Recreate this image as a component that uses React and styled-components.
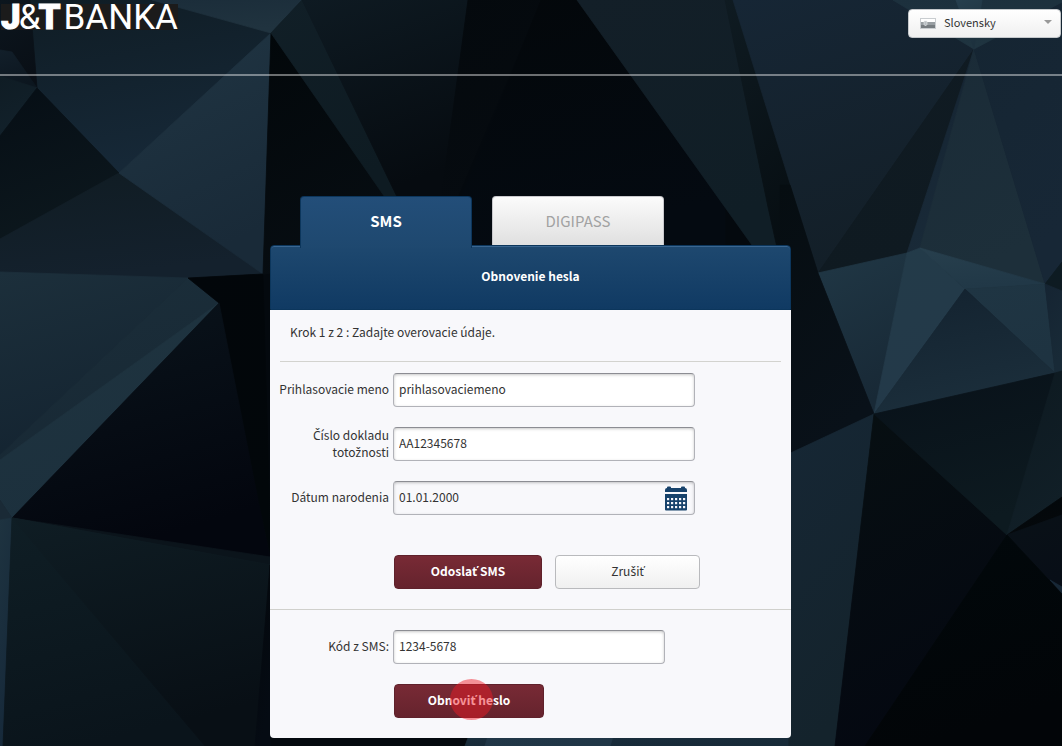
import { useState } from "react";
import styled, { createGlobalStyle } from "styled-components";

const GlobalStyle = createGlobalStyle`
  *, *::before, *::after {
    box-sizing: border-box;
  }

  body {
    margin: 0;
    background: #04090e;
    color: #333333;
    font-family: "Noto Sans CJK SC", "Noto Sans", sans-serif;
    font-size: 12px;
    line-height: 17px;
  }

  button, input, select {
    font: inherit;
    color: inherit;
  }
`

// points, colour at the top, colour at the bottom
const facets = [
  ["0,0 152,0 271,33 119,173 37,88 30,30", "#0f1c24", "#162837"],
  ["0,0 30,0 37,88 12,52 0,50", "#0c161e", "#090f16"],
  ["0,50 12,52 37,88 0,76", "#121f2a", "#0c161f"],
  ["0,76 37,88 0,136", "#0f1c24", "#12212b"],
  ["37,88 119,173 0,239 0,136", "#060e15", "#0c171d"],
  ["119,173 0,239 0,272 188,278 263,274", "#101c23", "#14212d"],
  ["271,33 119,173 263,274", "#203543", "#192a38"],
  ["152,0 302,0 271,33", "#1b2d3a", "#20333f"],
  ["0,272 188,278 0,455", "#1c2f3b", "#142431"],
  ["188,278 219,303 0,460 0,455", "#1b2e3a", "#182935"],
  ["219,303 0,460 0,500 12,518", "#1f3440", "#1c303d"],
  ["0,500 12,518 0,520", "#1a2a36", "#1a2a36"],
  ["0,520 12,518 3,746 0,746", "#1e3340", "#16293a"],
  ["188,278 263,274 271,557 258,500 219,303", "#02060a", "#02070a"],
  ["219,303 258,500 270,557 12,518", "#0a141c", "#03060e"],
  ["12,518 270,557 270,565", "#0b141b", "#0b141b"],
  ["12,518 270,565 255,746 3,746", "#0f1e25", "#0a141b"],
  ["12,518 270,565 255,746 205,746", "#0f1d24", "#080f15"],
  ["270,565 270,746 255,746", "#04080c", "#050b13"],
  ["271,33 389,203 389,260 263,274", "#02070a", "#070d12"],
  ["302,0 271,33 389,203 400,203", "#111f27", "#0e1b22"],
  ["302,0 468,0 446,162 440,203 400,203", "#0e1a22", "#060b10"],
  ["468,0 541,0 456,200 440,203 446,162", "#04090d", "#060b10"],
  ["541,0 577,0 725,207 725,250 440,250", "#03070a", "#040a11"],
  ["577,0 725,0 768,207 778,252 757,252", "#131f28", "#101e26"],
  ["725,0 733,0 818,273 790,280 778,252 768,207", "#0f1b22", "#060d11"],
  ["733,0 974,0 974,49 818,273", "#162635", "#131f28"],
  ["974,49 818,273 907,253", "#101b23", "#0f1a21"],
  ["974,49 907,253 920,248", "#142331", "#192a38"],
  ["974,49 920,248 1045,284", "#1a2b37", "#1d2f3a"],
  ["974,0 1062,0 1062,262 1045,284 974,49", "#152532", "#172736"],
  ["893,0 1062,0 1062,2 974,49", "#1c303d", "#1f3440"],
  ["956,0 982,0 974,49", "#263f4e", "#1d313e"],
  ["818,273 907,253 874,414", "#203745", "#182936"],
  ["907,253 920,248 965,289 874,414", "#233b49", "#233949"],
  ["920,248 1045,284 965,289", "#273f4d", "#213847"],
  ["965,289 1045,284 1055,373", "#1f3543", "#1e3341"],
  ["965,289 1055,373 874,414", "#13222f", "#1b2e3b"],
  ["1045,284 1062,262 1062,291", "#0d1b22", "#0e1b22"],
  ["1045,284 1062,291 1062,372 1055,373", "#152432", "#182a37"],
  ["790,185 818,273 874,414 780,458 780,185", "#060d11", "#091119"],
  ["874,414 780,458 780,746 835,746", "#162735", "#14232c"],
  ["874,414 1007,535 865,746 835,746", "#070f12", "#040811"],
  ["874,414 1055,373 1007,535", "#081119", "#0d1a20"],
  ["1055,373 1062,371 1062,497 1007,535", "#0d1920", "#111f27"],
  ["1007,535 1062,497 1062,515", "#02070a", "#05090c"],
  ["1007,535 1062,515 1062,594", "#091117", "#080e17"],
  ["1050,580 1062,587 1062,594", "#182938", "#162634"],
  ["1007,535 1062,594 1062,746 865,746", "#01080b", "#020508"],
  ["471,730 788,730 788,746 465,746", "#1b303e", "#172a38"],
  ["490,730 615,730 610,746 485,746", "#213748", "#203646"],
]

const Facets = () => (
  <Backdrop viewBox="0 0 1062 746" preserveAspectRatio="xMidYMin slice" aria-hidden="true">
    <defs>
      {facets.map(([points, from, to], i) => (
        <linearGradient key={points} id={`facet${i}`} x1="0" y1="0" x2="0.3" y2="1">
          <stop offset="0" stopColor={from} />
          <stop offset="1" stopColor={to} />
        </linearGradient>
      ))}
    </defs>
    {facets.map(([points], i) => (
      <polygon key={points} points={points} fill={`url(#facet${i})`} stroke={`url(#facet${i})`} strokeWidth="0.8" />
    ))}
  </Backdrop>
)

// letters with a caron are missing from the main font
const Caron = ({ children }) =>
  children.split(/([čšžť])/i).map((part, i) => (i % 2 ? <Letter key={i}>{part}</Letter> : part))

const dotColumns = [3, 7, 11, 15, 19]
const dotRows = [12, 16, 20]

const CalendarIcon = () => (
  <svg width="22" height="25" viewBox="0 0 22 25" fill="#17426b" aria-hidden="true">
    <path d="M2 1.500a1 1 0 0 1 1-1h2a1 1 0 0 1 1 1V2h10v-.5a1 1 0 0 1 1-1h2a1 1 0 0 1 1 1V2a2 2 0 0 1 2 2v2H0V4a2 2 0 0 1 2-2z" />
    <path d="M0 8h22v15.500a1 1 0 0 1-1 1H1a1 1 0 0 1-1-1z" />
    <g fill="#f7f7fb">
      {dotRows.map((y) =>
        dotColumns.map((x) => <rect key={`${x}-${y}`} x={x - 1} y={y} width="2.2" height="2.2" />)
      )}
    </g>
  </svg>
)

const FlagIcon = () => (
  <svg width="16" height="11" viewBox="0 0 16 11" aria-hidden="true">
    <rect width="16" height="11" fill="#c9cdd0" />
    <rect x="1" y="1" width="14" height="3" fill="#ffffff" />
    <rect x="1" y="4" width="14" height="3" fill="#989ea2" />
    <rect x="1" y="7" width="14" height="3" fill="#767c80" />
    <path d="M4 3h3v3.500L5.500 8 4 6.500z" fill="#b9bfc3" stroke="#eceeef" strokeWidth="0.6" />
  </svg>
)

const App = () => {
  const [active, setActive] = useState("sms")
  const [login, setLogin] = useState("prihlasovaciemeno")
  const [documentId, setDocumentId] = useState("AA12345678")
  const [birthDate, setBirthDate] = useState("01.01.2000")
  const [code, setCode] = useState("1234-5678")

  return (
    <Page>
      <GlobalStyle />
      <Facets />

      <Header>
        <Logo>
          <Heavy>J</Heavy>
          <Ampersand>&amp;</Ampersand>
          <Heavy>T</Heavy>
          <Word>BANKA</Word>
        </Logo>
        <Language>
          <FlagIcon />
          <select aria-label="Slovensky">
            <option>Slovensky</option>
          </select>
          <Arrow />
        </Language>
      </Header>

      <Main>
        <Tabs role="tablist">
          <Tab type="button" role="tab" aria-selected={active === "sms"} $active={active === "sms"} onClick={() => setActive("sms")}>SMS</Tab>
          <Tab type="button" role="tab" aria-selected={active === "digipass"} $active={active === "digipass"} onClick={() => setActive("digipass")}>DIGIPASS</Tab>
        </Tabs>
        <Title>Obnovenie hesla</Title>

        <Card onSubmit={(e) => e.preventDefault()}>
          <Step>Krok 1 z 2 : Zadajte overovacie údaje.</Step>
          <Fields>
            <Row>
              <label htmlFor="login">Prihlasovacie meno</label>
              <Input id="login" value={login} onChange={(e) => setLogin(e.target.value)} />
            </Row>
            <Row>
              <label htmlFor="document"><Caron>Číslo dokladu totožnosti</Caron></label>
              <Input id="document" value={documentId} onChange={(e) => setDocumentId(e.target.value)} />
            </Row>
            <Row>
              <label htmlFor="birth">Dátum narodenia</label>
              <DateBox>
                <input id="birth" value={birthDate} onChange={(e) => setBirthDate(e.target.value)} />
                <button type="button" aria-label="Dátum narodenia">
                  <CalendarIcon />
                </button>
              </DateBox>
            </Row>
          </Fields>
          <Actions>
            <Primary type="button" $width={148}><Caron>Odoslať SMS</Caron></Primary>
            <Secondary type="button"><Caron>Zrušiť</Caron></Secondary>
          </Actions>

          <Confirm>
            <Row>
              <label htmlFor="code">Kód z SMS:</label>
              <Input id="code" $width={272} value={code} onChange={(e) => setCode(e.target.value)} />
            </Row>
            <Submit>
              <Primary type="submit" $width={150}>
                <Caron>Obnoviť heslo</Caron>
                <Pointer />
              </Primary>
            </Submit>
          </Confirm>
        </Card>
      </Main>
    </Page>
  )
}

const Page = styled.div`
  position: relative;
  min-height: 100vh;
  padding-bottom: 8px;
  isolation: isolate;
`

const Backdrop = styled.svg`
  position: absolute;
  inset: 0;
  z-index: -1;
  width: 100%;
  height: 100%;
`

const Letter = styled.span`
  font-family: "Noto Sans", sans-serif;
  line-height: 1;
`

const Header = styled.header`
  display: flex;
  justify-content: space-between;
  align-items: flex-start;
  height: 76px;
  padding: 4px 1px 0;
  border-bottom: 2px solid rgba(255, 255, 255, 0.42);
`

const Logo = styled.div`
  display: flex;
  height: 26px;
  background: #1b1b1b;
  color: #ffffff;
  font-family: Roboto, sans-serif;
  font-size: 35px;
  line-height: 28px;
`

const Heavy = styled.span`
  font-weight: 900;
  -webkit-text-stroke: 1px #ffffff;
`

const Ampersand = styled.span`
  margin: 0 -2px;
  font-weight: 400;
`

const Word = styled.span`
  margin-left: 3px;
  font-weight: 400;
`

const Language = styled.div`
  display: grid;
  grid-template-columns: 16px 1fr 8px;
  align-items: center;
  width: 153px;
  height: 29px;
  margin-top: 5px;
  padding: 0 8px 0 11px;
  border: 1px solid #c4c8cb;
  border-radius: 4px;
  background: linear-gradient(#ffffff, #f0f0f0);

  select {
    appearance: none;
    width: 100%;
    padding: 0 8px 2px;
    border: 0;
    background: transparent;
    color: #333333;
    font-size: 11px;
  }
`

const Arrow = styled.span`
  margin-bottom: 4px;
  border: 4px solid transparent;
  border-top-color: #999999;
  border-bottom: 0;
`

const Main = styled.main`
  width: 100%;
  max-width: 522px;
  margin: 0 auto;
  padding: 120px 1px 0 0;
`

const Tabs = styled.div`
  display: flex;
  gap: 20px;
  height: 49px;
  padding: 0 30px;
`

const Tab = styled.button`
  width: 172px;
  height: ${({ $active }) => ($active ? "52px" : "49px")};
  padding: 0 0 ${({ $active }) => ($active ? "5px" : "2px")};
  border: 1px solid ${({ $active }) => ($active ? "#0c365c" : "#c9c9cd")};
  border-bottom: 0;
  border-radius: 4px 4px 0 0;
  background: ${({ $active }) => ($active ? "linear-gradient(#234e79, #1e486f)" : "linear-gradient(#fbfbfb, #e0e0e0)")};
  color: ${({ $active }) => ($active ? "#ffffff" : "#a2a2a2")};
  font-size: 15px;
  font-weight: ${({ $active }) => ($active ? 700 : 400)};
  cursor: pointer;
  z-index: 1;
`

const Title = styled.h1`
  display: flex;
  align-items: center;
  justify-content: center;
  height: 65px;
  margin: 0;
  padding-bottom: 4px;
  border: 1px solid #0c365c;
  border-radius: 4px 4px 0 0;
  background: linear-gradient(#1e486f, #103a63);
  box-shadow: inset 0 1px 0 #3a6690;
  color: #ffffff;
  font-size: 12px;
  font-weight: 700;
`

const Card = styled.form`
  border-radius: 0 0 4px 4px;
  background: #f8f8fb;
`

const Step = styled.p`
  margin: 0 10px;
  padding: 13px 10px 21px;
  border-bottom: 1px solid #d3d3cf;
`

const Fields = styled.div`
  display: grid;
  gap: 20px;
  padding: 11px 0 40px;
`

const Row = styled.div`
  display: grid;
  grid-template-columns: 119px 1fr;
  grid-template-rows: 34px;
  column-gap: 4px;
  align-items: center;

  label {
    padding: 0 0 3px 4px;
    text-align: right;
  }
`

const Input = styled.input`
  width: ${({ $width }) => $width || 302}px;
  height: 34px;
  padding: 0 5px 3px;
  border: 1px solid #b1b2b8;
  border-top-color: #8c8d93;
  border-radius: 4px;
  background: #ffffff;
  box-shadow: inset 0 1px 3px rgba(0, 0, 0, 0.22);
`

const DateBox = styled.div`
  display: flex;
  align-items: center;
  width: 302px;
  height: 34px;
  padding: 0 7px 0 5px;
  border: 1px solid #b1b2b8;
  border-top-color: #8c8d93;
  border-radius: 4px;
  box-shadow: inset 0 1px 3px rgba(0, 0, 0, 0.22);

  input {
    flex: 1;
    min-width: 0;
    padding: 0 0 3px;
    border: 0;
    background: transparent;
  }

  button {
    display: flex;
    padding: 0;
    border: 0;
    background: transparent;
    cursor: pointer;
  }
`

const Actions = styled.div`
  display: flex;
  gap: 13px;
  padding: 0 0 20px 124px;
`

const Button = styled.button`
  height: 34px;
  padding: 0 0 3px;
  border-radius: 4px;
  font-size: 12px;
  cursor: pointer;
`

const Primary = styled(Button)`
  position: relative;
  width: ${({ $width }) => $width}px;
  border: 1px solid #5f212b;
  background: linear-gradient(#782a35, #65232d);
  color: #ffffff;
  font-weight: 700;
`

const Secondary = styled(Button)`
  width: 145px;
  border: 1px solid #b9babd;
  background: linear-gradient(#ffffff, #f0f0f0);
`

const Confirm = styled.div`
  padding: 20px 0;
  border-top: 1px solid #d0d0cc;
`

const Submit = styled.div`
  padding: 20px 0 0 124px;
`

const Pointer = styled.span`
  position: absolute;
  top: -6px;
  left: 55px;
  width: 43px;
  height: 41px;
  border-radius: 50%;
  background: rgba(240, 25, 36, 0.47);
  pointer-events: none;
`

export default App;
